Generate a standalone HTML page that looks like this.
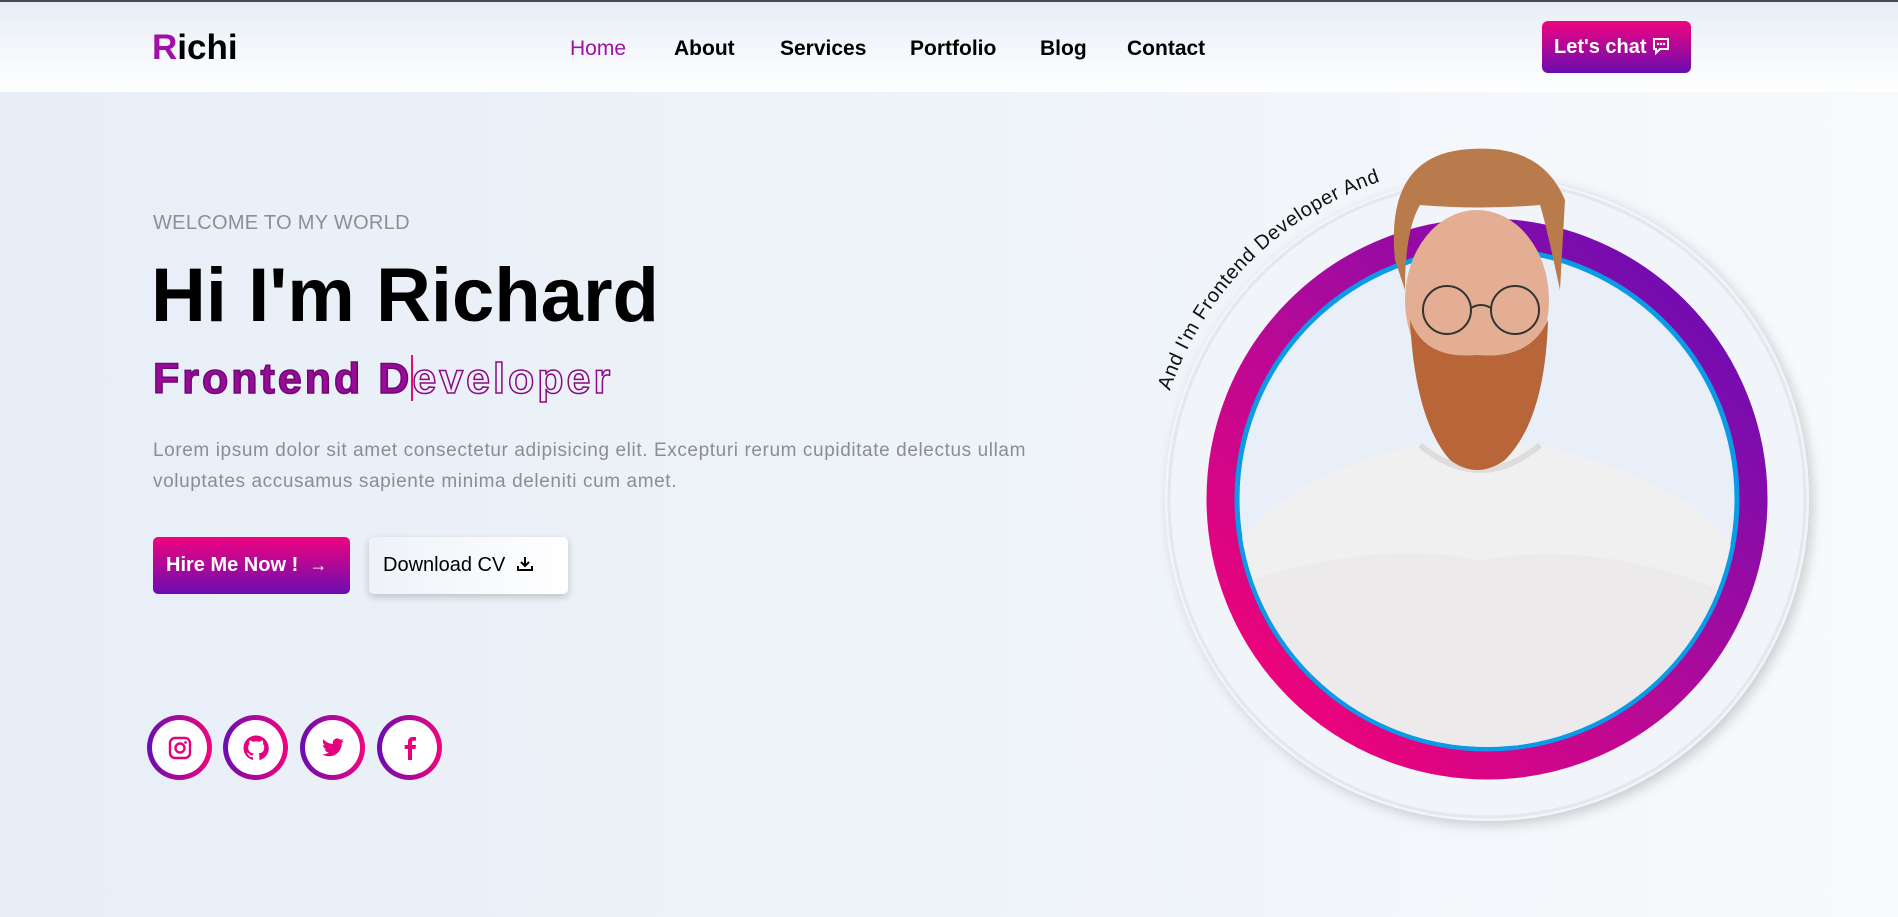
<!DOCTYPE html>
<html><head><meta charset="utf-8"><style>
*{margin:0;padding:0;box-sizing:border-box}
body{width:1898px;height:917px;overflow:hidden;font-family:"Liberation Sans",sans-serif;background:linear-gradient(90deg,#e8eef7 0%,#eef3f9 50%,#f8fafc 100%);position:relative}
.top{position:absolute;left:0;top:0;width:1898px;height:2px;background:#4a4a4a}
header{position:absolute;left:0;top:2px;width:1898px;height:90px;background:linear-gradient(180deg,#e8eef7,#ffffff)}
.logo{position:absolute;left:152px;top:26px;font-size:35px;font-weight:bold;color:#000}
.logo span{color:#a20fa8}
.nav a{position:absolute;top:35px;font-size:21px;font-weight:bold;color:#000;text-decoration:none}
.chat{position:absolute;left:1542px;top:19px;width:149px;height:52px;border-radius:6px;background:linear-gradient(180deg,#f0047f,#6a0db0);color:#fff;font-size:20px;font-weight:bold;line-height:52px;padding-left:12px}
.welcome{position:absolute;left:153px;top:212px;font-size:20px;color:#8a8f99;letter-spacing:0.3px}
h1{position:absolute;left:151px;top:252px;font-size:76px;font-weight:bold;color:#000}
.role{position:absolute;left:153px;top:355px;font-size:43px;font-weight:900;letter-spacing:3px}
.role .f{color:#9a0a98;-webkit-text-stroke:1.5px #6a0a70}
.role .o{color:transparent;-webkit-text-stroke:1.5px #8a0a80}
.caret{display:inline-block;width:2px;height:46px;background:#e0107a;vertical-align:-8px;margin:0 -1px}
p.desc{position:absolute;left:153px;top:435px;width:1100px;font-size:19px;line-height:31px;color:#8b8d93;letter-spacing:0.6px}
.hire{position:absolute;left:153px;top:537px;width:197px;height:57px;border-radius:5px;background:linear-gradient(180deg,#f0047f,#6a0db0);color:#fff;font-size:20px;font-weight:bold;line-height:57px;padding-left:13px}
.dl{position:absolute;left:369px;top:537px;width:199px;height:57px;border-radius:5px;background:linear-gradient(90deg,#eef2f8,#fff);box-shadow:0 3px 8px rgba(0,0,0,.2);color:#000;font-size:20px;line-height:57px;padding-left:14px}
.soc{position:absolute;top:715px;width:65px;height:65px;border-radius:50%;background:linear-gradient(90deg,#6a0db0,#f0047f);padding:5px}
.soc div{width:55px;height:55px;border-radius:50%;background:#fff;display:flex;align-items:center;justify-content:center}
</style></head><body>
<div class="top"></div>
<header>
<div class="logo"><span>R</span>ichi</div>
<div class="nav">
<a style="left:570px;color:#a20fa8;font-weight:normal">Home</a>
<a style="left:674px">About</a>
<a style="left:780px">Services</a>
<a style="left:910px">Portfolio</a>
<a style="left:1040px">Blog</a>
<a style="left:1127px">Contact</a>
</div>
<div class="chat">Let's chat <svg width="18" height="18" viewBox="0 0 18 18" style="vertical-align:-2px"><path d="M2 2h14v10H8l-4 4v-4H2z" fill="none" stroke="#fff" stroke-width="2"/><circle cx="6" cy="7" r="1.2" fill="#fff"/><circle cx="9" cy="7" r="1.2" fill="#fff"/><circle cx="12" cy="7" r="1.2" fill="#fff"/></svg></div>
</header>

<div class="welcome">WELCOME TO MY WORLD</div>
<h1>Hi I'm Richard</h1>
<div class="role"><span class="f">Frontend D</span><span class="caret"></span><span class="o">eveloper</span></div>
<p class="desc">Lorem ipsum dolor sit amet consectetur adipisicing elit. Excepturi rerum cupiditate delectus ullam<br>voluptates accusamus sapiente minima deleniti cum amet.</p>
<div class="hire">Hire Me Now ! &nbsp;<span style="font-size:18px">→</span></div>
<div class="dl">Download CV &nbsp;<svg width="18" height="16" viewBox="0 0 18 16" style="vertical-align:-1px"><path d="M9 1v9M5 6l4 4 4-4M2 10v4h14v-4" fill="none" stroke="#000" stroke-width="2"/></svg></div>

<div class="soc" style="left:147px"><div><svg width="24" height="24" viewBox="0 0 24 24"><rect x="2" y="2" width="20" height="20" rx="5" fill="none" stroke="#e6007e" stroke-width="2.4"/><circle cx="12" cy="12" r="4.5" fill="none" stroke="#e6007e" stroke-width="2.4"/><circle cx="17.5" cy="6.5" r="1.4" fill="#e6007e"/></svg></div></div>
<div class="soc" style="left:223px"><div><svg width="26" height="26" viewBox="0 0 24 24"><path fill="#e6007e" d="M12 .5C5.6.5.5 5.6.5 12c0 5.1 3.3 9.4 7.9 10.9.6.1.8-.3.8-.6v-2c-3.2.7-3.9-1.5-3.9-1.5-.5-1.3-1.3-1.7-1.3-1.7-1-.7.1-.7.1-.7 1.2.1 1.8 1.2 1.8 1.2 1 1.8 2.7 1.3 3.4 1 .1-.8.4-1.3.7-1.6-2.6-.3-5.2-1.3-5.2-5.7 0-1.3.5-2.3 1.2-3.1-.1-.3-.5-1.5.1-3.1 0 0 1-.3 3.2 1.2a11 11 0 0 1 5.8 0c2.2-1.5 3.2-1.2 3.2-1.2.6 1.6.2 2.8.1 3.1.7.8 1.2 1.8 1.2 3.1 0 4.4-2.7 5.4-5.3 5.7.4.4.8 1.1.8 2.2v3.2c0 .3.2.7.8.6 4.6-1.5 7.9-5.8 7.9-10.9C23.5 5.6 18.4.5 12 .5z"/></svg></div></div>
<div class="soc" style="left:300px"><div><svg width="26" height="24" viewBox="0 0 24 24"><path fill="#e6007e" d="M23 4.6c-.8.4-1.7.6-2.6.7.9-.6 1.6-1.4 2-2.5-.9.5-1.9.9-2.9 1.1a4.5 4.5 0 0 0-7.7 4.1C8 7.8 4.7 6 2.5 3.3c-1.2 2-.6 4.6 1.4 6-.7 0-1.4-.2-2-.6 0 2.2 1.6 4.1 3.6 4.5-.7.2-1.4.2-2 .1.6 1.8 2.3 3.1 4.2 3.1A9 9 0 0 1 1 18.3 12.8 12.8 0 0 0 7.9 20.3c8.3 0 12.9-6.9 12.9-12.9v-.6c.9-.6 1.6-1.4 2.2-2.2z"/></svg></div></div>
<div class="soc" style="left:377px"><div><svg width="14" height="24" viewBox="0 0 14 24"><path fill="#e6007e" d="M9 24V13h3.5l.5-4H9V6.5C9 5.4 9.3 4.6 11 4.6h2V1.1C12.6 1 11.4.9 10 .9 7.1.9 5 2.7 5 6v3H1.7v4H5v11z"/></svg></div></div>

<svg width="1898" height="917" style="position:absolute;left:0;top:0" viewBox="0 0 1898 917">
<defs>
<linearGradient id="rg" x1="1" y1="0" x2="0" y2="1"><stop offset="0" stop-color="#5e0db8"/><stop offset="0.5" stop-color="#b00a9a"/><stop offset="1" stop-color="#ff0070"/></linearGradient>
<clipPath id="ic"><circle cx="1487" cy="499" r="248"/></clipPath>
<filter id="sh" x="-20%" y="-20%" width="140%" height="140%"><feDropShadow dx="4" dy="4" stdDeviation="6" flood-color="#000" flood-opacity="0.18"/></filter>
<path id="arc" d="M1487,499 m-335,0 a335,335 0 1,1 670,0 a335,335 0 1,1 -670,0"/>
</defs>
<circle cx="1487" cy="499" r="322" fill="#f1f4f9" filter="url(#sh)"/>
<circle cx="1487" cy="499" r="318" fill="none" stroke="#e3e7ee" stroke-width="3"/>
<circle cx="1487" cy="499" r="266" fill="none" stroke="url(#rg)" stroke-width="29"/>
<circle cx="1487" cy="499" r="250" fill="#e8eff8" stroke="#0a9ae6" stroke-width="5"/>
<g clip-path="url(#ic)">
<path d="M1240 540 Q1300 470 1420 445 L1540 445 Q1680 480 1730 540 L1760 800 L1220 800 Z" fill="#f1f0f0"/>
<path d="M1250 580 Q1380 540 1480 560 Q1600 540 1720 590 L1730 760 L1240 760Z" fill="#eceaea"/>
</g>
<path d="M1420 445 Q1480 495 1540 445" fill="none" stroke="#e0dcdc" stroke-width="6"/>
<rect x="1448" y="380" width="60" height="70" fill="#d9a088"/>
<ellipse cx="1477" cy="300" rx="72" ry="90" fill="#e4ae94"/>
<path d="M1410 320 Q1415 420 1450 460 Q1477 480 1505 460 Q1545 420 1548 320 Q1530 360 1477 355 Q1425 360 1410 320Z" fill="#b8653a"/>
<path d="M1395 260 Q1385 160 1460 150 Q1540 140 1565 200 L1560 290 Q1545 220 1540 205 Q1480 210 1420 205 Q1405 230 1405 290Z" fill="#b97a4c"/>
<circle cx="1447" cy="310" r="24" fill="none" stroke="#333" stroke-width="2"/>
<circle cx="1515" cy="310" r="24" fill="none" stroke="#333" stroke-width="2"/>
<path d="M1471 308 Q1481 302 1491 308" fill="none" stroke="#333" stroke-width="2"/>
<text font-family="Liberation Sans" font-size="20" fill="#111" letter-spacing="0.6"><textPath href="#arc" startOffset="110">And I'm Frontend Developer And</textPath></text>
</svg>
</body></html>
